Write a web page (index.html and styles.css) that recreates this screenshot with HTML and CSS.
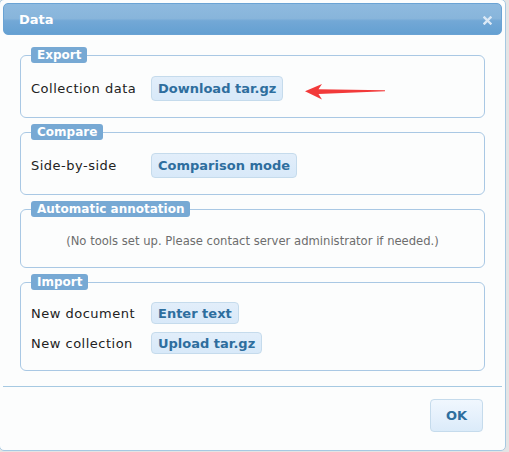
FILE: index.html
```html
<!DOCTYPE html>
<html lang="en">
<head>
    <meta charset="UTF-8">
    <meta name="viewport" content="width=device-width, initial-scale=1.0">
    <title>Data</title>
    <link rel="stylesheet" href="styles.css">
</head>
<body>
    <div class="dialog">
        <div class="dialog-header">
            <span class="dialog-title">Data</span>
            <svg class="dialog-close" width="9" height="9" viewBox="0 0 9 9">
                <path d="M1.5 1.5 L7.5 7.5 M7.5 1.5 L1.5 7.5" stroke="#dce9f6" stroke-width="2.4" stroke-linecap="square"/>
            </svg>
        </div>
        <div class="dialog-body">
            <fieldset class="group">
                <legend>Export</legend>
                <div class="row">
                    <span class="label">Collection data</span>
                    <span><button type="button" class="btn">Download tar.gz</button></span>
                    <svg class="arrow" width="82" height="18" viewBox="0 0 82 18">
                        <polygon points="1,8.2 18,1 14.5,6.2 81,7.2 81,8.2 14.5,11 18,16.5" fill="#f23a3a"/>
                    </svg>
                </div>
            </fieldset>
            <fieldset class="group">
                <legend>Compare</legend>
                <div class="row">
                    <span class="label">Side-by-side</span>
                    <span><button type="button" class="btn">Comparison mode</button></span>
                </div>
            </fieldset>
            <fieldset class="group group-info">
                <legend>Automatic annotation</legend>
                <div class="info">(No tools set up. Please contact server administrator if needed.)</div>
            </fieldset>
            <fieldset class="group group-import">
                <legend>Import</legend>
                <div class="row">
                    <span class="label">New document</span>
                    <span><button type="button" class="btn btn-sm">Enter text</button></span>
                </div>
                <div class="row">
                    <span class="label">New collection</span>
                    <span><button type="button" class="btn btn-sm">Upload tar.gz</button></span>
                </div>
            </fieldset>
        </div>
        <div class="dialog-buttons">
            <button type="button" class="btn-ok">OK</button>
        </div>
    </div>
</body>
</html>
```

FILE: styles.css
```css
body {
    margin: 0;
    padding: 0;
    background: #e4e4e4;
    font-family: "DejaVu Sans", Verdana, sans-serif;
    font-size: 13px;
    color: #222;
}
.dialog {
    box-sizing: border-box;
    width: 507px;
    height: 452px;
    margin: -1px 0 0 -1px;
    padding: 3px;
    border: 1px solid #a6c9e2;
    border-radius: 5px;
    background: #fcfdfd;
    display: flex;
    flex-direction: column;
}
.dialog-header {
    box-sizing: border-box;
    height: 32px;
    padding: 0 9px 0 15px;
    border: 1px solid #6aa3d4;
    border-radius: 5px;
    background: linear-gradient(to bottom, #8ebadf 0%, #88b5db 48%, #73a8d6 56%, #64a0d2 100%);
    display: flex;
    align-items: center;
    justify-content: space-between;
}
.dialog-title {
    color: #fff;
    font-weight: bold;
    font-size: 13px;
}
.dialog-close {
    margin-top: 2px;
}
.dialog-body {
    padding-top: 12px;
}
.group {
    position: relative;
    margin: 0 17px 6px;
    padding: 13px 10px 16px;
    border: 1px solid #a9c8e4;
    border-radius: 6px;
    min-inline-size: 0;
}
.group legend {
    margin: 0;
    padding: 0 6px;
    line-height: 16px;
    font-size: 12px;
    font-weight: bold;
    color: #fff;
    background: #77a9d4;
    border-radius: 3px;
}
.row {
    position: relative;
    display: grid;
    grid-template-columns: 120px auto;
    align-items: center;
}
.label {
    letter-spacing: 0.5px;
}
.btn {
    font-family: inherit;
    font-size: 13px;
    font-weight: bold;
    line-height: 15px;
    color: #2e6e9e;
    padding: 4px 6px;
    border: 1px solid #c5dbec;
    border-radius: 4px;
    background: linear-gradient(to bottom, #e2eefa, #d8e9f9);
    cursor: pointer;
}
.btn-sm {
    padding: 3px 6px 2px;
}
.group-import {
    padding-top: 12px;
    margin-bottom: 0;
}
.group-import .row + .row {
    margin-top: 8px;
}
.group-info {
    padding: 16px 10px 18px;
}
.info {
    text-align: center;
    line-height: 16px;
    font-size: 11.6px;
    color: #6d6d6d;
}
.arrow {
    position: absolute;
    left: 273px;
    top: 7px;
}
.dialog-buttons {
    margin-top: 15px;
    border-top: 1px solid #a6c9e2;
    padding: 12px 19px 0 0;
    display: flex;
    justify-content: flex-end;
}
.btn-ok {
    width: 53px;
    height: 33px;
    font-family: inherit;
    font-size: 13px;
    font-weight: bold;
    color: #2e6e9e;
    border: 1px solid #c5dbec;
    border-radius: 4px;
    background: linear-gradient(to bottom, #f0f7fe 0%, #e6f1fc 50%, #dbebf9 100%);
    cursor: pointer;
}
```
